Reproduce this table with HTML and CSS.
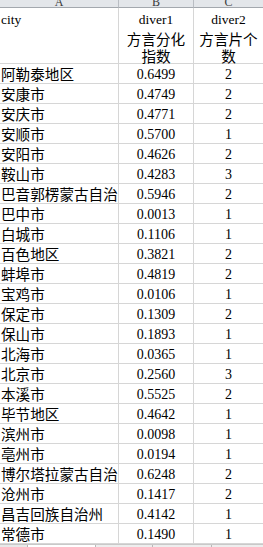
FILE: index.html
```html
<!DOCTYPE html>
<html lang="zh">
<head>
<meta charset="utf-8">
<link rel="stylesheet" href="styles.css">
</head>
<body>
<div class="sheet">
  <div class="colheads">
    <div class="ch">A</div>
    <div class="ch">B</div>
    <div class="ch">C</div>
  </div>
  <div class="grid">
    <div class="cell head"><div class="l1">city</div></div>
    <div class="cell head ctr"><div class="l1">diver1</div><div class="l2">方言分化</div><div class="l2">指数</div></div>
    <div class="cell head ctr"><div class="l1">diver2</div><div class="l2">方言片个</div><div class="l2">数</div></div>

    <div class="cell city">阿勒泰地区</div><div class="cell num">0.6499</div><div class="cell num">2</div>
    <div class="cell city">安康市</div><div class="cell num">0.4749</div><div class="cell num">2</div>
    <div class="cell city">安庆市</div><div class="cell num">0.4771</div><div class="cell num">2</div>
    <div class="cell city">安顺市</div><div class="cell num">0.5700</div><div class="cell num">1</div>
    <div class="cell city">安阳市</div><div class="cell num">0.4626</div><div class="cell num">2</div>
    <div class="cell city">鞍山市</div><div class="cell num">0.4283</div><div class="cell num">3</div>
    <div class="cell city">巴音郭楞蒙古自治州</div><div class="cell num">0.5946</div><div class="cell num">2</div>
    <div class="cell city">巴中市</div><div class="cell num">0.0013</div><div class="cell num">1</div>
    <div class="cell city">白城市</div><div class="cell num">0.1106</div><div class="cell num">1</div>
    <div class="cell city">百色地区</div><div class="cell num">0.3821</div><div class="cell num">2</div>
    <div class="cell city">蚌埠市</div><div class="cell num">0.4819</div><div class="cell num">2</div>
    <div class="cell city">宝鸡市</div><div class="cell num">0.0106</div><div class="cell num">1</div>
    <div class="cell city">保定市</div><div class="cell num">0.1309</div><div class="cell num">2</div>
    <div class="cell city">保山市</div><div class="cell num">0.1893</div><div class="cell num">1</div>
    <div class="cell city">北海市</div><div class="cell num">0.0365</div><div class="cell num">1</div>
    <div class="cell city">北京市</div><div class="cell num">0.2560</div><div class="cell num">3</div>
    <div class="cell city">本溪市</div><div class="cell num">0.5525</div><div class="cell num">2</div>
    <div class="cell city">毕节地区</div><div class="cell num">0.4642</div><div class="cell num">1</div>
    <div class="cell city">滨州市</div><div class="cell num">0.0098</div><div class="cell num">1</div>
    <div class="cell city">亳州市</div><div class="cell num">0.0194</div><div class="cell num">1</div>
    <div class="cell city">博尔塔拉蒙古自治州</div><div class="cell num">0.6248</div><div class="cell num">2</div>
    <div class="cell city">沧州市</div><div class="cell num">0.1417</div><div class="cell num">2</div>
    <div class="cell city">昌吉回族自治州</div><div class="cell num">0.4142</div><div class="cell num">1</div>
    <div class="cell city">常德市</div><div class="cell num">0.1490</div><div class="cell num">1</div>
  </div>
  <div class="tabs">
    <div class="tab first"></div>
    <div class="tab w68"></div>
    <div class="tab w57"></div>
    <div class="tab w59"></div>
    <div class="tab rest"></div>
  </div>
</div>
</body>
</html>
```

FILE: styles.css
```css
html, body {
  margin: 0;
  padding: 0;
  background: #ffffff;
}

.sheet {
  width: 263px;
  overflow: hidden;
  color: #000;
}

.colheads {
  display: grid;
  grid-template-columns: 119px 75px 69px;
  height: 8px;
  background: #e3e6ea;
}

.ch {
  box-sizing: border-box;
  height: 8px;
  border-right: 1px solid #b9bdc3;
  border-bottom: 1px solid #a3a8ae;
  overflow: hidden;
  text-align: center;
  font-family: "Liberation Serif", serif;
  font-size: 12px;
  line-height: 5px;
  color: #3a3a3a;
}

.ch:last-child {
  border-right: 0;
}

.grid {
  display: grid;
  grid-template-columns: 119px 75px 69px;
}

.cell {
  box-sizing: border-box;
  height: 20px;
  border-right: 1px solid #d6d6d6;
  border-bottom: 1px solid #d6d6d6;
  white-space: nowrap;
  overflow: hidden;
}

.cell:nth-child(3n) {
  border-right: 0;
}

.head {
  height: 56px;
  padding-top: 1px;
  overflow: visible;
}

.head .l1 {
  font-family: "Liberation Serif", serif;
  font-size: 13.5px;
  line-height: 21px;
  padding-left: 1px;
}

.head .l2 {
  font-family: "Noto Sans CJK SC", sans-serif;
  font-size: 14.6px;
  line-height: 17px;
}

.ctr {
  text-align: center;
}

.ctr .l1 {
  padding-left: 0;
}

.city {
  font-family: "Noto Sans CJK SC", sans-serif;
  font-size: 14.6px;
  line-height: 19px;
  padding-left: 1px;
}

.num {
  font-family: "Liberation Serif", serif;
  font-size: 14px;
  line-height: 17px;
  padding-top: 2px;
  text-align: center;
}

.tabs {
  display: flex;
  height: 4px;
  border-top: 1px solid #c9c9c9;
  box-sizing: border-box;
  background: #ffffff;
}

.tab {
  box-sizing: border-box;
  height: 3px;
  border-right: 1px solid #b8b8b8;
}

.tab.first {
  width: 28px;
  background: #e9e9e9;
}

.tab.w68 {
  width: 68px;
}

.tab.w57 {
  width: 57px;
  background: #eeeeee;
}

.tab.w59 {
  width: 59px;
  background: #eeeeee;
}

.tab.rest {
  flex: 1;
  border-right: 0;
  background: #eeeeee;
}
```
